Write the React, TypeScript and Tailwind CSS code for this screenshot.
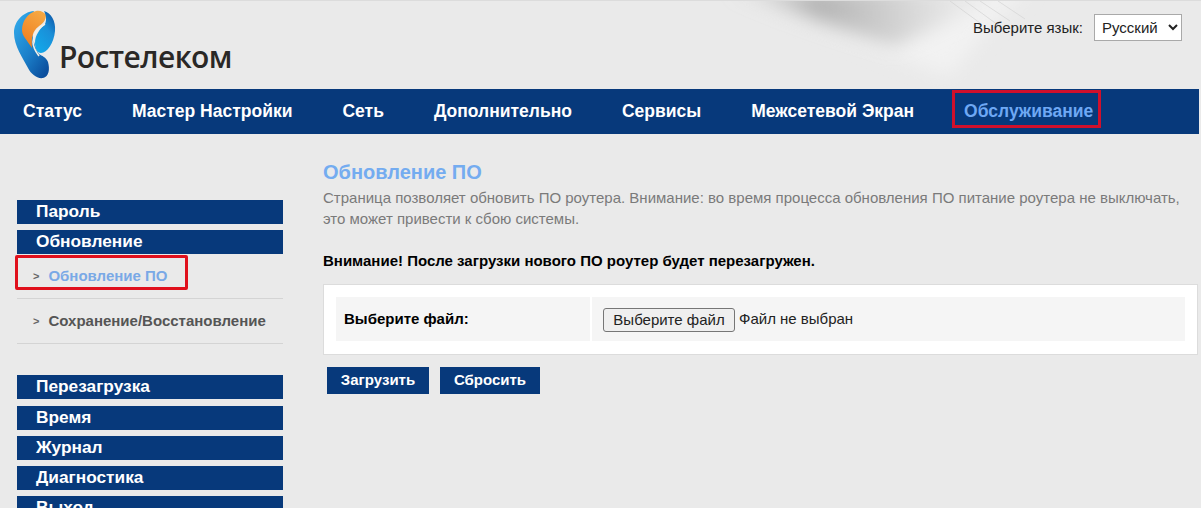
import React from 'react';

const navItems = ['Статус', 'Мастер Настройки', 'Сеть', 'Дополнительно', 'Сервисы', 'Межсетевой Экран'];
const sideTop = ['Пароль', 'Обновление'];
const sideBottom = ['Время', 'Журнал', 'Диагностика', 'Выход'];

const Logo = () => (
  <svg width="44" height="70" viewBox="0 0 44 70" className="shrink-0">
    <defs>
      <linearGradient id="stem" x1="0.1" y1="0.1" x2="0.8" y2="1">
        <stop offset="0" stopColor="#2fa6e8" />
        <stop offset="0.55" stopColor="#1b7fc9" />
        <stop offset="1" stopColor="#0b4f9e" />
      </linearGradient>
      <linearGradient id="lobe" x1="0.2" y1="1" x2="0.8" y2="0">
        <stop offset="0" stopColor="#12a8ea" />
        <stop offset="0.6" stopColor="#1a8fd8" />
        <stop offset="1" stopColor="#0d58a8" />
      </linearGradient>
      <linearGradient id="orange" x1="0.7" y1="0" x2="0.3" y2="1">
        <stop offset="0" stopColor="#f6a843" />
        <stop offset="1" stopColor="#ee7d1f" />
      </linearGradient>
    </defs>
    <path d="M20 1C9 2 0 11 0 23C0 36 9 48 14 58C17 64 23 69 29 68C35 67 36 59 34 52C32 47 28 46 25 44C20 36 14 14 20 1Z" fill="url(#stem)" />
    <path d="M22 1C14 3 8 11 8 20C8 26 13 30 18 38C17 27 19 21 24 17C28 14 32 11 32 5C30 2 26 0 22 1Z" fill="url(#orange)" />
    <path d="M30 1C37 3 42 11 41 21C40 33 33 43 27 43C23 43 21 38 21 33C21 25 26 19 31 14C33 10 32 5 30 1Z" fill="url(#lobe)" />
    <path d="M31 14C24 18 19 24 19 32C19 38 22 42 25 46" stroke="#f3efe6" strokeWidth="1.6" fill="none" />
  </svg>
);

const Swoosh = () => (
  <svg width="420" height="89" viewBox="0 0 420 89" className="absolute left-[680px] top-0">
    <defs>
      <filter id="soft" x="-30%" y="-80%" width="160%" height="260%">
        <feGaussianBlur stdDeviation="9" />
      </filter>
      <linearGradient id="sw" x1="0" y1="0" x2="1" y2="0">
        <stop offset="0" stopColor="#c8c8c8" stopOpacity="0.3" />
        <stop offset="0.3" stopColor="#b4b4b4" />
        <stop offset="0.7" stopColor="#e0e0e0" />
        <stop offset="1" stopColor="#eaeaea" stopOpacity="0" />
      </linearGradient>
    </defs>
    <path d="M60 -12L350 -12C310 20 290 50 270 75C210 55 130 20 60 -12Z" fill="#f2f2f2" filter="url(#soft)" />
    <path d="M50 -12L340 -12C300 5 260 25 215 45C180 35 120 15 50 -12Z" fill="url(#sw)" filter="url(#soft)" />
    <g stroke="#d4d4d4" strokeWidth="1" opacity="0.7">
      <path d="M270 0L300 22" />
      <path d="M285 0L318 24" />
      <path d="M300 0L330 20" />
      <path d="M318 0L345 18" />
    </g>
  </svg>
);

const SideBar = ({ label }: { label: string }) => (
  <div className="h-6 bg-[#07397b] pl-[19px] text-[17.3px] font-bold leading-[22px] text-white">{label}</div>
);

const Arrow = () => <span className="mr-[9px] text-[11px] font-bold leading-none text-[#666]">&gt;</span>;

export default function App() {
  return (
    <div className="relative h-[508px] w-[1201px] overflow-hidden bg-[#eaeaea] font-['Liberation_Sans',Arial,sans-serif]">
      <header className="relative flex h-[89px] justify-between border-t border-[#dcdcdc] pl-[14px] pr-[19px]">
        <Swoosh />
        <div className="relative flex items-start pt-[9px]">
          <Logo />
          <span className="ml-[1px] mt-[25px] font-['Open_Sans',sans-serif] text-[30px] font-semibold leading-[44px] tracking-[-0.6px] text-[#2a2826]">
            Ростелеком
          </span>
        </div>
        <div className="relative flex items-start gap-[11px] pt-[13px]">
          <span className="text-[15px] leading-[27px] text-[#222]">Выберите язык:</span>
          <select className="h-[27px] w-[88px] border border-[#a9a9a9] bg-white pl-[3px] text-[15px] text-[#222]">
            <option>Русский</option>
          </select>
        </div>
      </header>

      <nav className="flex h-[45px] w-[1199px] items-center gap-[50px] bg-[#07397b] pl-[23px] text-[17.5px] font-bold text-white">
        {navItems.map(item => (
          <span key={item}>{item}</span>
        ))}
        <span className="relative text-[#6ea8f4]">
          Обслуживание
          <span className="absolute -bottom-[3px] -left-[12px] -right-[8px] -top-[8px] border-[3px] border-[#d0102c]" />
        </span>
      </nav>

      <div className="flex">
        <aside className="ml-[17px] mt-[66px] w-[266px] shrink-0">
          <div className="flex flex-col gap-[6px]">
            {sideTop.map(item => (
              <SideBar key={item} label={item} />
            ))}
          </div>
          <div className="flex h-[45px] items-center border-b border-[#d4d4d4] pl-[16px] pt-[1px] text-[15px] font-bold text-[#7aa9e6]">
            <span className="relative flex items-center">
              <Arrow />
              Обновление ПО
              <span className="absolute -bottom-[2px] -left-[18px] -right-[20px] -top-[10px] rounded-[2px] border-[3px] border-[#e0101c]" />
            </span>
          </div>
          <div className="flex h-[45px] items-center border-b border-[#d4d4d4] pl-[16px] text-[15px] font-bold text-[#555]">
            <Arrow />
            Сохранение/Восстановление
          </div>
          <div className="mt-[31px]">
            <SideBar label="Перезагрузка" />
          </div>
          <div className="mt-[7px] flex flex-col gap-[6px]">
            {sideBottom.map(item => (
              <SideBar key={item} label={item} />
            ))}
          </div>
        </aside>

        <main className="ml-[40px] w-[875px] shrink-0 pt-[26px]">
          <h1 className="text-[20px] font-bold leading-[24px] text-[#74acf0]">Обновление ПО</h1>
          <p className="mt-[3px] text-[15px] leading-[21px] text-[#7a7a7a]">
            Страница позволяет обновить ПО роутера. Внимание: во время процесса обновления ПО питание роутера не выключать,
            <br />
            это может привести к сбою системы.
          </p>
          <p className="mt-[21px] text-[15px] font-bold leading-[21px] text-black">
            Внимание! После загрузки нового ПО роутер будет перезагружен.
          </p>
          <div className="mt-[13px] h-[71px] border border-[#dcdcdc] bg-white px-[12px] py-[12px]">
            <div className="flex h-[44px] gap-[2px]">
              <div className="flex w-[254px] items-center bg-[#f5f5f5] pl-[8px] pt-[1px] text-[15px] font-bold text-black">Выберите файл:</div>
              <div className="flex flex-1 items-center gap-[4px] bg-[#f5f5f5] pl-[11px] pt-[1px] text-[15px] text-[#222]">
                <button className="h-[24px] w-[132px] rounded-[3px] border border-[#767676] bg-[#efefef] text-[15px] text-[#222]">
                  Выберите файл
                </button>
                <span>Файл не выбран</span>
              </div>
            </div>
          </div>
          <div className="ml-[4px] mt-[12px] flex gap-[11px]">
            <button className="h-[27px] w-[102px] bg-[#07397b] text-[15px] font-bold text-white">Загрузить</button>
            <button className="h-[27px] w-[100px] bg-[#07397b] text-[15px] font-bold text-white">Сбросить</button>
          </div>
        </main>
      </div>
    </div>
  );
}
